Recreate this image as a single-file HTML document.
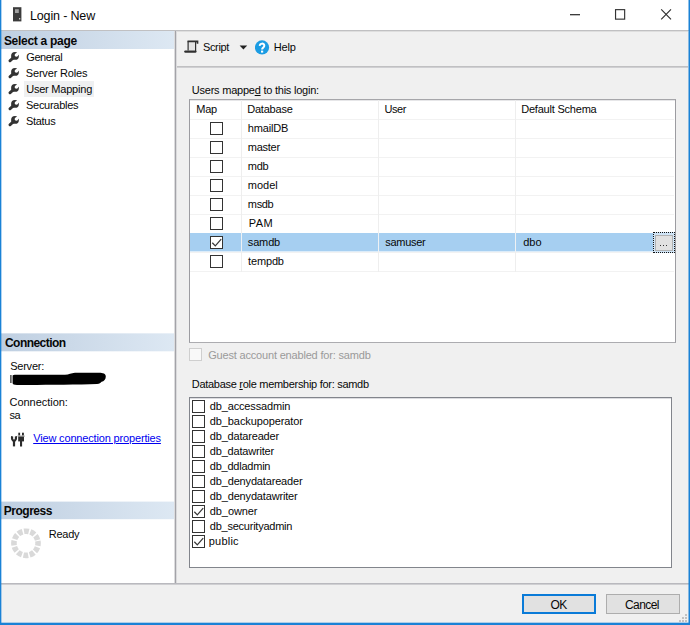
<!DOCTYPE html>
<html>
<head>
<meta charset="utf-8">
<title>Login - New</title>
<style>
*{box-sizing:border-box;margin:0;padding:0}
html,body{width:690px;height:625px;overflow:hidden;background:#f0f0f0}
body{font-family:"Liberation Sans",sans-serif;font-size:11px;color:#080808;position:relative}
.a{position:absolute}
.t{position:absolute;white-space:nowrap;line-height:13px;height:13px}
.t u{text-decoration:underline;text-underline-offset:1px}
.cb{position:absolute;width:13px;height:13px;border:1px solid #333;background:#fff}
.hdr{position:absolute;left:2px;width:173px;height:18px;background:linear-gradient(to right,#bfcfe1,#dde8f3)}
.hl{position:absolute;background:#eff0f1}
.vl{position:absolute;width:1px;background:#eeeeee}
.row{position:absolute;left:190px;width:484px;height:1px;background:#f2f2f2}
</style>
</head>
<body>
<!-- title bar -->
<div class="a" style="left:0;top:0;width:690px;height:30px;background:#fff"></div>
<svg class="a" style="left:12px;top:7px" width="10" height="15" viewBox="0 0 10 15">
  <rect x="1" y="0.2" width="8.4" height="14.2" fill="#3b3b3b"/>
  <rect x="3" y="2.2" width="3.8" height="3.8" fill="#a2a2a2"/>
  <rect x="7" y="11" width="1.3" height="1.5" fill="#c8c8c8"/>
</svg>
<!-- caption buttons -->
<div class="a" style="left:570px;top:14px;width:10px;height:1px;background:#3c3c3c"></div>
<div class="a" style="left:570px;top:15px;width:10px;height:1px;background:#bdbdbd"></div>
<svg class="a" style="left:613px;top:7px" width="15" height="15"><rect x="2.55" y="2.65" width="9.1" height="9.5" fill="none" stroke="#333" stroke-width="1.15"/></svg>
<svg class="a" style="left:660px;top:8px" width="12" height="13" viewBox="0 0 12 13"><path d="M1.2 1.3 L11 11.3 M11 1.3 L1.2 11.3" stroke="#2e2e2e" stroke-width="1.15" fill="none"/></svg>

<!-- title bottom line -->
<div class="a" style="left:1px;top:30px;width:688px;height:1px;background:#c0c0c2"></div>
<div class="a" style="left:177px;top:31px;width:511px;height:1px;background:#dedede"></div>

<!-- left panel -->
<div class="a" style="left:1px;top:31px;width:174px;height:552px;background:#fff"></div>
<div class="a" style="left:174px;top:31px;width:1px;height:552px;background:#dcdcde"></div>
<div class="a" style="left:175px;top:31px;width:1px;height:552px;background:#a3a3a8"></div>
<div class="a" style="left:176px;top:31px;width:1px;height:552px;background:#dadadc"></div>

<div class="hdr" style="top:31px;left:1px;width:173px"></div>
<div class="hdr" style="top:334px;left:1px;width:173px;height:17px"></div>
<div class="hdr" style="top:333px;left:1px;width:173px;height:1px;opacity:.65"></div>
<div class="hdr" style="top:351px;left:1px;width:173px;height:1px;opacity:.3"></div>
<div class="hdr" style="top:502px;left:1px;width:173px;height:17px"></div>
<div class="hdr" style="top:501px;left:1px;width:173px;height:1px;opacity:.4"></div>
<div class="hdr" style="top:519px;left:1px;width:173px;height:1px;opacity:.2"></div>
<div class="hl" style="left:24px;top:81px;width:70px;height:16px"></div>

<svg width="0" height="0" style="position:absolute">
  <defs>
    <mask id="wm" maskUnits="userSpaceOnUse" x="0" y="0" width="14" height="14"><rect x="0" y="0" width="14" height="14" fill="#fff"/><circle cx="9.4" cy="4.7" r="1.75" fill="#000"/><path d="M9.4 4.7 L14 0.1" stroke="#000" stroke-width="3.1"/></mask>
    <g id="wr" transform="translate(0.3 0.6) scale(0.96)">
      <g mask="url(#wm)"><circle cx="8" cy="5.5" r="4.05" fill="#333"/></g>
      <path d="M6.4 7.3 L2.7 10.7" stroke="#333" stroke-width="2.9" stroke-linecap="round" fill="none"/>
    </g>
    <g id="ck"><path d="M2.3 6.7 L5.3 9.9 L11.2 3.2" stroke="#383838" stroke-width="1.25" fill="none"/></g>
  </defs>
</svg>
<svg class="a" style="left:7px;top:50px" width="14" height="14"><g transform="translate(0.3 0.6) scale(0.96)">
      <g mask="url(#wm)"><circle cx="8" cy="5.5" r="4.05" fill="#333"/></g>
      <path d="M6.4 7.3 L2.7 10.7" stroke="#333" stroke-width="2.9" stroke-linecap="round" fill="none"/></g></svg>
<svg class="a" style="left:7px;top:66px" width="14" height="14"><g transform="translate(0.3 0.6) scale(0.96)">
      <g mask="url(#wm)"><circle cx="8" cy="5.5" r="4.05" fill="#333"/></g>
      <path d="M6.4 7.3 L2.7 10.7" stroke="#333" stroke-width="2.9" stroke-linecap="round" fill="none"/></g></svg>
<svg class="a" style="left:7px;top:82px" width="14" height="14"><g transform="translate(0.3 0.6) scale(0.96)">
      <g mask="url(#wm)"><circle cx="8" cy="5.5" r="4.05" fill="#333"/></g>
      <path d="M6.4 7.3 L2.7 10.7" stroke="#333" stroke-width="2.9" stroke-linecap="round" fill="none"/></g></svg>
<svg class="a" style="left:7px;top:98px" width="14" height="14"><g transform="translate(0.3 0.6) scale(0.96)">
      <g mask="url(#wm)"><circle cx="8" cy="5.5" r="4.05" fill="#333"/></g>
      <path d="M6.4 7.3 L2.7 10.7" stroke="#333" stroke-width="2.9" stroke-linecap="round" fill="none"/></g></svg>
<svg class="a" style="left:7px;top:114px" width="14" height="14"><g transform="translate(0.3 0.6) scale(0.96)">
      <g mask="url(#wm)"><circle cx="8" cy="5.5" r="4.05" fill="#333"/></g>
      <path d="M6.4 7.3 L2.7 10.7" stroke="#333" stroke-width="2.9" stroke-linecap="round" fill="none"/></g></svg>

<!-- redacted server name -->
<svg class="a" style="left:9px;top:371px" width="100" height="16" viewBox="0 0 100 16">
  <rect x="1.3" y="4" width="1.2" height="8" fill="#222"/>
  <path d="M3.6 4.6 C4 3.6 6 3.8 10 3.8 L56 3.8 C60 3.8 62 2 66 1.8 L90 1.7 C94 1.7 96.8 2.6 96.8 5.6 C96.8 8.6 95 10.4 92.6 10.8 C91.6 12 90.6 12.8 88 13 C70 13.6 40 13.9 20 13.9 L8 13.9 C5 13.9 3.8 13.4 3.6 12 Z" fill="#000"/>
</svg>

<!-- connection icon -->
<svg class="a" style="left:10px;top:432px" width="16" height="16" viewBox="0 0 16 16">
  <path d="M2.1 4.3 C1.6 6.8 2.5 8.4 4 9.2 C5.5 8.4 6.4 6.8 5.9 4.3" stroke="#2b2b2b" stroke-width="2.1" fill="none"/>
  <rect x="2.9" y="8.6" width="2.2" height="5.8" fill="#2b2b2b"/>
  <rect x="8.3" y="0.7" width="1.8" height="2.8" fill="#2b2b2b"/>
  <rect x="12" y="0.7" width="1.9" height="2.8" fill="#2b2b2b"/>
  <rect x="7.5" y="3.6" width="7.3" height="1" fill="#8c8c8c"/>
  <rect x="8.2" y="4.6" width="5.8" height="4.8" fill="#2b2b2b"/>
  <rect x="10" y="9" width="2.1" height="5.5" fill="#2b2b2b"/>
</svg>

<!-- spinner -->
<svg class="a" style="left:10px;top:527px" width="32" height="33" viewBox="0 0 32 33">
  <circle cx="16" cy="16.3" r="12.1" fill="none" stroke="#d9d9d9" stroke-width="5.6" stroke-dasharray="4.75 1.586" transform="rotate(-11 16 16.3)"/>
</svg>

<!-- toolbar -->
<div class="a" style="left:177px;top:66px;width:511px;height:1px;background:#c0c0c2"></div>
<div class="a" style="left:177px;top:67px;width:511px;height:1px;background:#cfcfd2"></div>
<svg class="a" style="left:184px;top:40px" width="15" height="14" viewBox="0 0 15 14">
  <path d="M4.1 1.2 V10.2 H11.2 V1.2 Z" fill="#e4e4e4"/>
  <path d="M3.5 1.3 H13.5 V3.8" stroke="#303030" stroke-width="1.7" fill="none"/>
  <path d="M4.1 1.2 V10.5" stroke="#303030" stroke-width="1.2" fill="none"/>
  <path d="M11.6 1.2 V11.6" stroke="#303030" stroke-width="1.2" fill="none"/>
  <path d="M1.4 11.6 H11.3" stroke="#303030" stroke-width="2.4" stroke-linecap="round" fill="none"/>
</svg>
<svg class="a" style="left:239px;top:45px" width="9" height="5"><path d="M0.6 0.4 H8.2 L4.4 4.4 Z" fill="#222"/></svg>
<svg class="a" style="left:255px;top:40px" width="15" height="15" viewBox="0 0 15 15">
  <circle cx="7" cy="7.4" r="7.1" fill="#1b9ce3"/>
  <path d="M4.8 5.9 C4.7 2.9 9.3 2.9 9.3 5.7 C9.3 7.4 7.1 7.5 7.1 9.5" stroke="#fff" stroke-width="2" fill="none"/>
  <rect x="6" y="10.6" width="2.2" height="2" fill="#fff"/>
</svg>

<!-- grid -->
<div class="a" style="left:189px;top:99px;width:487px;height:244px;background:#fff;border:1px solid #9c9ca1;border-top-color:#a6a6aa;border-bottom-color:#acacb0"></div>
<div class="a" style="left:190px;top:100px;width:485px;height:1px;background:#e6e6e8"></div>
<div class="a" style="left:190px;top:233px;width:463px;height:18px;background:#a6cff1"></div>
<div class="a" style="left:190px;top:251px;width:463px;height:1px;background:#dcecf9"></div>
<div class="row" style="top:119px"></div>
<div class="row" style="top:138px"></div>
<div class="row" style="top:157px"></div>
<div class="row" style="top:176px"></div>
<div class="row" style="top:195px"></div>
<div class="row" style="top:214px"></div>
<div class="row" style="top:252px"></div>
<div class="row" style="top:271px"></div>
<div class="vl" style="left:241px;top:100px;height:172px"></div>
<div class="vl" style="left:378px;top:100px;height:172px"></div>
<div class="vl" style="left:515px;top:100px;height:172px"></div>
<div class="a" style="left:241px;top:233px;width:1px;height:19px;background:#eef1f4"></div>
<div class="a" style="left:378px;top:233px;width:1px;height:19px;background:#eef1f4"></div>
<div class="a" style="left:515px;top:233px;width:1px;height:19px;background:#eef1f4"></div>

<div class="cb" style="left:210px;top:122px"></div>
<div class="cb" style="left:210px;top:141px"></div>
<div class="cb" style="left:210px;top:160px"></div>
<div class="cb" style="left:210px;top:179px"></div>
<div class="cb" style="left:210px;top:198px"></div>
<div class="cb" style="left:210px;top:217px"></div>
<div class="cb" style="left:210px;top:236px"></div>
<div class="cb" style="left:210px;top:255px"></div>
<svg class="a" style="left:210px;top:236px" width="13" height="13"><g><path d="M2.3 6.7 L5.3 9.9 L11.2 3.2" stroke="#383838" stroke-width="1.25" fill="none"/></g></svg>

<!-- ellipsis button -->
<div class="a" style="left:653px;top:232px;width:22px;height:21px;background:#cfe4f6;border:1px dotted #111"></div>
<div class="a" style="left:655px;top:235px;width:18px;height:16px;background:#e1e1e1;border:1px solid #b2b2b2"></div>
<div class="a" style="left:660px;top:245px;width:1px;height:1px;background:#333;box-shadow:3px 0 0 #333,6px 0 0 #333"></div>

<!-- guest -->
<div class="cb" style="left:189px;top:348px;border-color:#cfcfcf;background:#f9f9f9"></div>

<!-- role listbox -->
<div class="a" style="left:189px;top:397px;width:483px;height:171px;background:#fff;border:1px solid #82858c"></div>
<div class="a" style="left:190px;top:398px;width:481px;height:1px;background:#dcdce0"></div>
<div class="cb" style="left:192px;top:400px"></div>
<div class="cb" style="left:192px;top:415px"></div>
<div class="cb" style="left:192px;top:430px"></div>
<div class="cb" style="left:192px;top:445px"></div>
<div class="cb" style="left:192px;top:460px"></div>
<div class="cb" style="left:192px;top:475px"></div>
<div class="cb" style="left:192px;top:490px"></div>
<div class="cb" style="left:192px;top:505px"></div>
<div class="cb" style="left:192px;top:520px"></div>
<div class="cb" style="left:192px;top:535px"></div>
<svg class="a" style="left:192px;top:505px" width="13" height="13"><g><path d="M2.3 6.7 L5.3 9.9 L11.2 3.2" stroke="#383838" stroke-width="1.25" fill="none"/></g></svg>
<svg class="a" style="left:192px;top:535px" width="13" height="13"><g><path d="M2.3 6.7 L5.3 9.9 L11.2 3.2" stroke="#383838" stroke-width="1.25" fill="none"/></g></svg>

<!-- bottom separator -->
<div class="a" style="left:1px;top:583px;width:688px;height:1px;background:#b9b9be"></div>
<div class="a" style="left:1px;top:584px;width:688px;height:1px;background:#cfcfd2"></div>

<!-- buttons -->
<div class="a" style="left:522px;top:594px;width:74px;height:20px;background:#e1e1e1;border:2px solid #0a7bd8"></div>
<div class="a" style="left:606px;top:594px;width:74px;height:20px;background:#e1e1e1;border:1px solid #adadad"></div>

<!-- resize grip -->
<div class="a" style="left:685px;top:614px;width:2px;height:2px;background:#c2c2c2;box-shadow:0 3px 0 #c2c2c2,0 6px 0 #c2c2c2,-3px 3px 0 #c2c2c2,-3px 6px 0 #c2c2c2,-6px 6px 0 #c2c2c2"></div>

<div class="t" style="left:30.0px;top:8.5px;font-size:12.5px;letter-spacing:-0.15px;line-height:15px;height:15px">Login - New</div>
<div class="t" style="left:3.9px;top:33px;font-size:12px;font-weight:700;letter-spacing:-0.28px;line-height:16px;height:16px">Select a page</div>
<div class="t" style="left:26.3px;top:51px;letter-spacing:-0.47px;">General</div>
<div class="t" style="left:25.8px;top:67px;letter-spacing:-0.18px;">Server Roles</div>
<div class="t" style="left:26.2px;top:83px;letter-spacing:-0.22px;">User Mapping</div>
<div class="t" style="left:26.0px;top:99px;letter-spacing:-0.28px;">Securables</div>
<div class="t" style="left:26.0px;top:115px;letter-spacing:-0.3px;">Status</div>
<div class="t" style="left:5.0px;top:335px;font-size:12px;font-weight:700;letter-spacing:-0.55px;line-height:16px;height:16px">Connection</div>
<div class="t" style="left:10.2px;top:360px;letter-spacing:-0.23px;">Server:</div>
<div class="t" style="left:9.5px;top:396px;letter-spacing:-0.03px;">Connection:</div>
<div class="t" style="left:9.5px;top:409px;letter-spacing:-0.55px;">sa</div>
<div class="t" style="left:33.2px;top:432px;letter-spacing:-0.16px;color:#0000f0;text-decoration:underline">View connection properties</div>
<div class="t" style="left:3.8px;top:503px;font-size:12px;font-weight:700;letter-spacing:-0.5px;line-height:16px;height:16px">Progress</div>
<div class="t" style="left:48.8px;top:528px;letter-spacing:-0.25px;">Ready</div>
<div class="t" style="left:203.0px;top:41px;letter-spacing:-0.36px;">Script</div>
<div class="t" style="left:273.8px;top:41px;letter-spacing:-0.17px;">Help</div>
<div class="t" style="left:191.8px;top:84px;letter-spacing:-0.23px;">Users mappe<u>d</u> to this login:</div>
<div class="t" style="left:196.2px;top:103px;letter-spacing:-0.2px;">Map</div>
<div class="t" style="left:247.2px;top:103px;letter-spacing:-0.2px;">Database</div>
<div class="t" style="left:384.5px;top:103px;letter-spacing:-0.43px;">User</div>
<div class="t" style="left:521.2px;top:103px;letter-spacing:-0.21px;">Default Schema</div>
<div class="t" style="left:247.8px;top:122px;letter-spacing:-0.17px;">hmailDB</div>
<div class="t" style="left:247.8px;top:141px;letter-spacing:-0.26px;">master</div>
<div class="t" style="left:247.8px;top:160px;letter-spacing:-0.3px;">mdb</div>
<div class="t" style="left:247.8px;top:179px;letter-spacing:0.0px;">model</div>
<div class="t" style="left:247.8px;top:198px;letter-spacing:-0.33px;">msdb</div>
<div class="t" style="left:248.8px;top:217px;letter-spacing:0.4px;">PAM</div>
<div class="t" style="left:247.8px;top:236px;letter-spacing:-0.15px;">samdb</div>
<div class="t" style="left:248.1px;top:255px;letter-spacing:-0.16px;">tempdb</div>
<div class="t" style="left:385.2px;top:236px;letter-spacing:-0.28px;">samuser</div>
<div class="t" style="left:523.2px;top:236px;letter-spacing:0.0px;">dbo</div>
<div class="t" style="left:208.2px;top:349px;letter-spacing:-0.18px;color:#9a9a9a">Guest account enabled for: samdb</div>
<div class="t" style="left:191.8px;top:378px;letter-spacing:-0.29px;">Database <u>r</u>ole membership for: samdb</div>
<div class="t" style="left:209.8px;top:400px;letter-spacing:-0.15px;">db_accessadmin</div>
<div class="t" style="left:209.8px;top:415px;letter-spacing:-0.1px;">db_backupoperator</div>
<div class="t" style="left:209.8px;top:430px;letter-spacing:-0.19px;">db_datareader</div>
<div class="t" style="left:209.8px;top:445px;letter-spacing:-0.19px;">db_datawriter</div>
<div class="t" style="left:209.8px;top:460px;letter-spacing:-0.23px;">db_ddladmin</div>
<div class="t" style="left:209.8px;top:475px;letter-spacing:-0.16px;">db_denydatareader</div>
<div class="t" style="left:209.8px;top:490px;letter-spacing:-0.16px;">db_denydatawriter</div>
<div class="t" style="left:209.8px;top:505px;letter-spacing:-0.09px;">db_owner</div>
<div class="t" style="left:209.8px;top:520px;letter-spacing:-0.24px;">db_securityadmin</div>
<div class="t" style="left:208.8px;top:535px;letter-spacing:0.2px;">public</div>
<div class="t" style="left:550.5px;top:598px;font-size:12px;letter-spacing:-0.55px;line-height:14px;height:14px">OK</div>
<div class="t" style="left:624.9px;top:598px;font-size:12px;letter-spacing:-0.55px;line-height:14px;height:14px">Cancel</div>

<!-- window border -->
<div class="a" style="left:0;top:0;width:1px;height:625px;background:#1a82d6"></div>
<div class="a" style="left:1px;top:0;width:1px;height:625px;background:#1a82d6;opacity:.35"></div>
<div class="a" style="left:689px;top:0;width:1px;height:625px;background:#1a82d6"></div>
<div class="a" style="left:688px;top:0;width:1px;height:625px;background:#1a82d6;opacity:.5"></div>
<div class="a" style="left:0;top:623px;width:690px;height:2px;background:#1a82d6"></div>
<div class="a" style="left:0;top:622px;width:690px;height:1px;background:#1a82d6;opacity:.3"></div>
</body>
</html>
